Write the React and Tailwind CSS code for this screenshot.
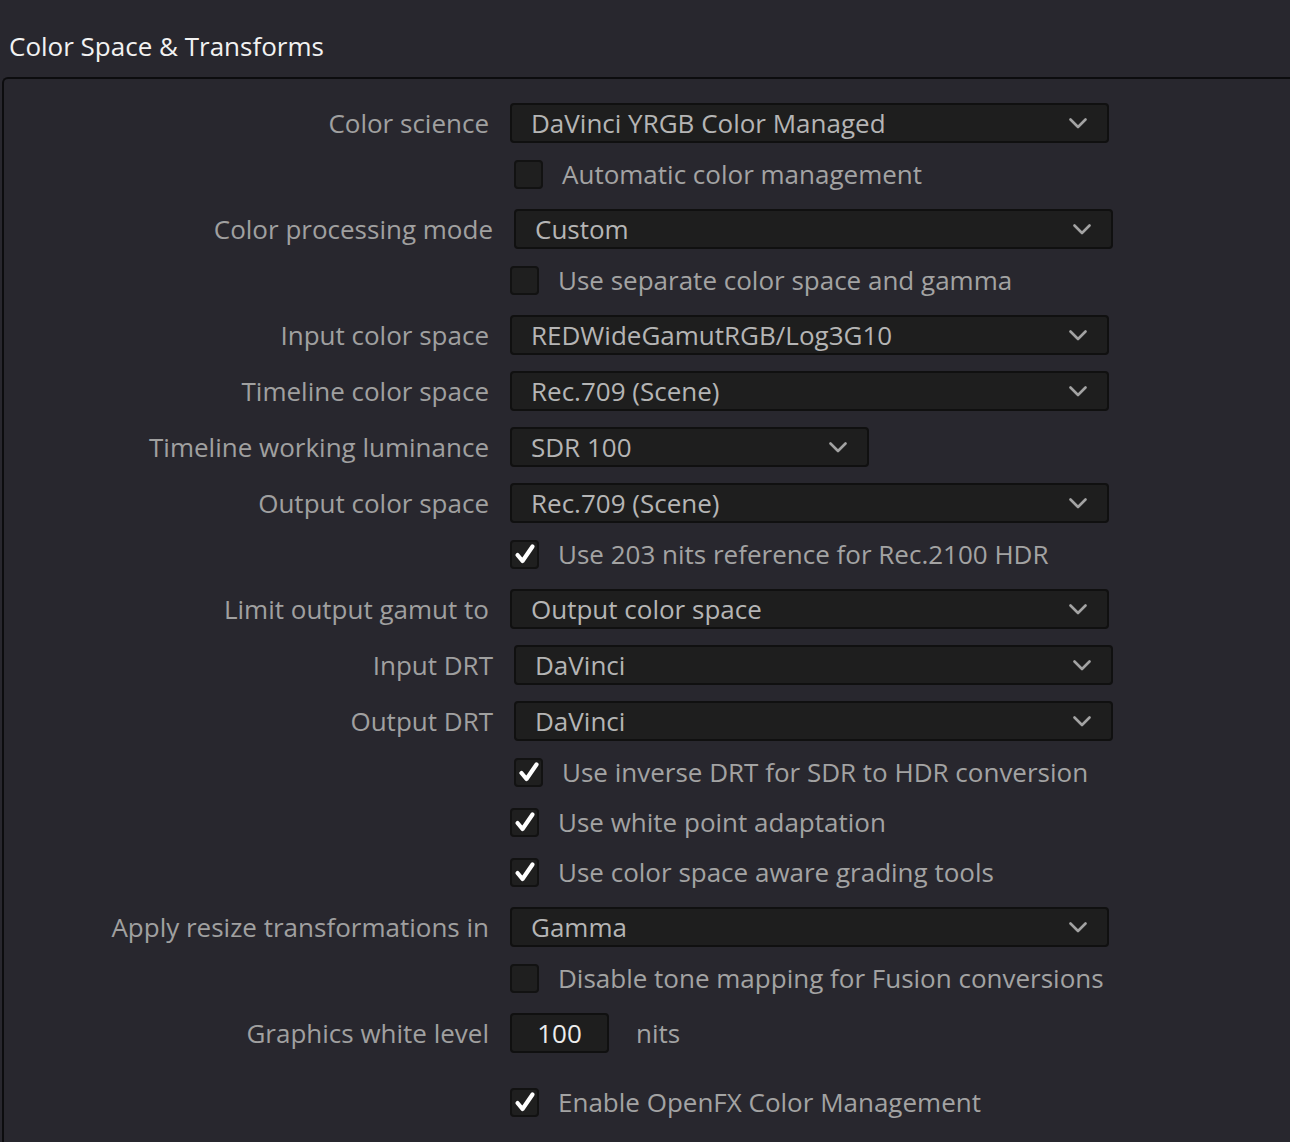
import React from 'react';

const rows = [
  { type: 'select', label: 'Color science', value: 'DaVinci YRGB Color Managed', mt: 'mt-0' },
  { type: 'check', label: 'Automatic color management', checked: false, mt: 'mt-[11px]', shift: true },
  { type: 'select', label: 'Color processing mode', value: 'Custom', mt: 'mt-[15px]', shift: true },
  { type: 'check', label: 'Use separate color space and gamma', checked: false, mt: 'mt-[11px]' },
  { type: 'select', label: 'Input color space', value: 'REDWideGamutRGB/Log3G10', mt: 'mt-[15px]' },
  { type: 'select', label: 'Timeline color space', value: 'Rec.709 (Scene)', mt: 'mt-[16px]' },
  { type: 'select', label: 'Timeline working luminance', value: 'SDR 100', mt: 'mt-[16px]', short: true },
  { type: 'select', label: 'Output color space', value: 'Rec.709 (Scene)', mt: 'mt-[16px]' },
  { type: 'check', label: 'Use 203 nits reference for Rec.2100 HDR', checked: true, mt: 'mt-[11px]' },
  { type: 'select', label: 'Limit output gamut to', value: 'Output color space', mt: 'mt-[15px]' },
  { type: 'select', label: 'Input DRT', value: 'DaVinci', mt: 'mt-[16px]', shift: true },
  { type: 'select', label: 'Output DRT', value: 'DaVinci', mt: 'mt-[16px]', shift: true },
  { type: 'check', label: 'Use inverse DRT for SDR to HDR conversion', checked: true, mt: 'mt-[11px]', shift: true },
  { type: 'check', label: 'Use white point adaptation', checked: true, mt: 'mt-[10px]' },
  { type: 'check', label: 'Use color space aware grading tools', checked: true, mt: 'mt-[10px]' },
  { type: 'select', label: 'Apply resize transformations in', value: 'Gamma', mt: 'mt-[15px]' },
  { type: 'check', label: 'Disable tone mapping for Fusion conversions', checked: false, mt: 'mt-[11px]' },
  { type: 'number', label: 'Graphics white level', value: '100', unit: 'nits', mt: 'mt-[15px]' },
  { type: 'check', label: 'Enable OpenFX Color Management', checked: true, mt: 'mt-[29px]' },
];

const Chevron = () => (
  <svg width="18" height="11" viewBox="0 0 18 11" fill="none">
    <path d="M1.5 1.5 L9 9 L16.5 1.5" stroke="#a3a3a3" strokeWidth="2.6" strokeLinecap="round" strokeLinejoin="round" />
  </svg>
);

const Checkbox = ({ checked }) => (
  <div className="w-[29px] h-[29px] shrink-0 rounded-[4px] border-2 border-[#121212] bg-[#1f1f1f] flex items-center justify-center">
    {checked && (
      <svg width="22" height="22" viewBox="0 0 22 22" fill="none">
        <path d="M3.5 12 L8.5 18 L18.5 3.5" stroke="#ffffff" strokeWidth="4.2" strokeLinecap="round" strokeLinejoin="round" />
      </svg>
    )}
  </div>
);

const Row = ({ row }) => {
  const shift = row.shift ? 'pl-[4px]' : '';
  return (
    <div className={`flex items-center h-10 ${row.mt} ${shift}`}>
      <div className="w-[486px] shrink-0 pr-[1px] text-right text-[#a0a0a0]">
        {row.type !== 'check' ? row.label : ''}
      </div>
      <div className="ml-[20px] flex items-center">
        {row.type === 'select' && (
          <div
            className={`h-10 ${row.short ? 'w-[359px]' : 'w-[599px]'} rounded-[4px] border-2 border-[#101010] bg-[#1e1e1e] flex items-center justify-between pl-[19px] pr-[20px] text-[#b5b5b5]`}
          >
            <span>{row.value}</span>
            <Chevron />
          </div>
        )}
        {row.type === 'check' && (
          <div className="flex items-center">
            <Checkbox checked={row.checked} />
            <span className="ml-[19px] text-[#a3a3a3]">{row.label}</span>
          </div>
        )}
        {row.type === 'number' && (
          <div className="flex items-center">
            <div className="h-10 w-[99px] rounded-[4px] border-2 border-[#101010] bg-[#1e1e1e] flex items-center justify-center text-[#ececec]">
              {row.value}
            </div>
            <span className="ml-[27px] text-[#a3a3a3]">{row.unit}</span>
          </div>
        )}
      </div>
    </div>
  );
};

export default function App() {
  return (
    <div
      className="w-[1290px] h-[1142px] overflow-hidden bg-[#28272e] text-[26px] leading-none"
      style={{ fontFamily: '"Open Sans", "Noto Sans", sans-serif' }}
    >
      <div className="h-[77px] flex items-center pl-[9px] pt-[15px] text-[#f2f2f2]">
        Color Space &amp; Transforms
      </div>
      <div className="ml-[2px] w-[1300px] h-[1100px] border-t-2 border-l-2 border-[#0c0c0e] rounded-tl-[6px] pt-[24px]">
        {rows.map((row, i) => (
          <Row key={i} row={row} />
        ))}
      </div>
    </div>
  );
}
